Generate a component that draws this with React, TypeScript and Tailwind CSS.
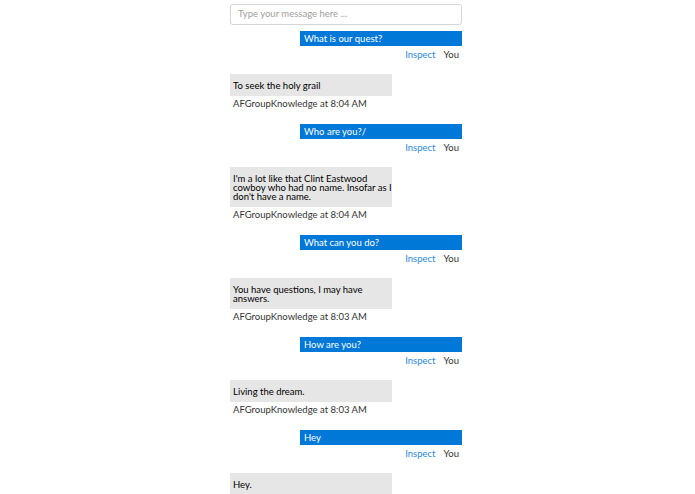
const messages = [
  { user: "What is our quest?", bot: ["To seek the holy grail"], time: "8:04 AM" },
  { user: "Who are you?/", bot: ["I'm a lot like that Clint Eastwood", "cowboy who had no name. Insofar as I", "don't have a name."], time: "8:04 AM" },
  { user: "What can you do?", bot: ["You have questions, I may have", "answers."], time: "8:03 AM" },
  { user: "How are you?", bot: ["Living the dream."], time: "8:03 AM" },
  { user: "Hey", bot: ["Hey."], time: "" },
];

const UserMessage = ({ text }: { text: string }) => {
  return (
    <div className="flex flex-col items-end">
      <div className="w-[162px] h-[15px] bg-[#0078d7] text-white px-[4px] leading-[15px]">{text}</div>
      <div className="flex flex-row gap-[8px] h-[14px] mt-[2px] pr-[3px] leading-[14px]">
        <span className="text-[#2b88d8]">Inspect</span>
        <span className="text-[#333]">You</span>
      </div>
    </div>
  );
};

const BotMessage = ({ lines, time }: { lines: string[]; time: string }) => {
  return (
    <div className="flex flex-col items-start">
      <div className="w-[162px] bg-[#e6e6e6] text-black px-[3px] pt-[7px] pb-[6px] leading-[9px] whitespace-nowrap">
        {lines.map((l, i) => (
          <div key={i} className="h-[9px]">{l}</div>
        ))}
      </div>
      {time && (
        <div className="h-[14px] mt-[1.5px] px-[3px] leading-[14px] text-[#333]">AFGroupKnowledge at {time}</div>
      )}
    </div>
  );
};

export default function App() {
  return (
    <div className="w-full h-[494px] bg-white overflow-hidden" style={{ fontFamily: 'Lato, "Noto Sans", sans-serif' }}>
      <div className="w-[232px] ml-[230px] pt-[4px] text-[9.5px]">
        <div className="h-[21px] border border-[#d6d6d6] rounded-[3px] px-[7px] flex items-center text-[#a0a0a0]">
          Type your message here ...
        </div>
        <div className="flex flex-col mt-[6px]">
          {messages.map((m, i) => (
            <div key={i} className="flex flex-col mb-[13px]">
              <UserMessage text={m.user} />
              <div className="mt-[11.5px]">
                <BotMessage lines={m.bot} time={m.time} />
              </div>
            </div>
          ))}
        </div>
      </div>
    </div>
  );
}
